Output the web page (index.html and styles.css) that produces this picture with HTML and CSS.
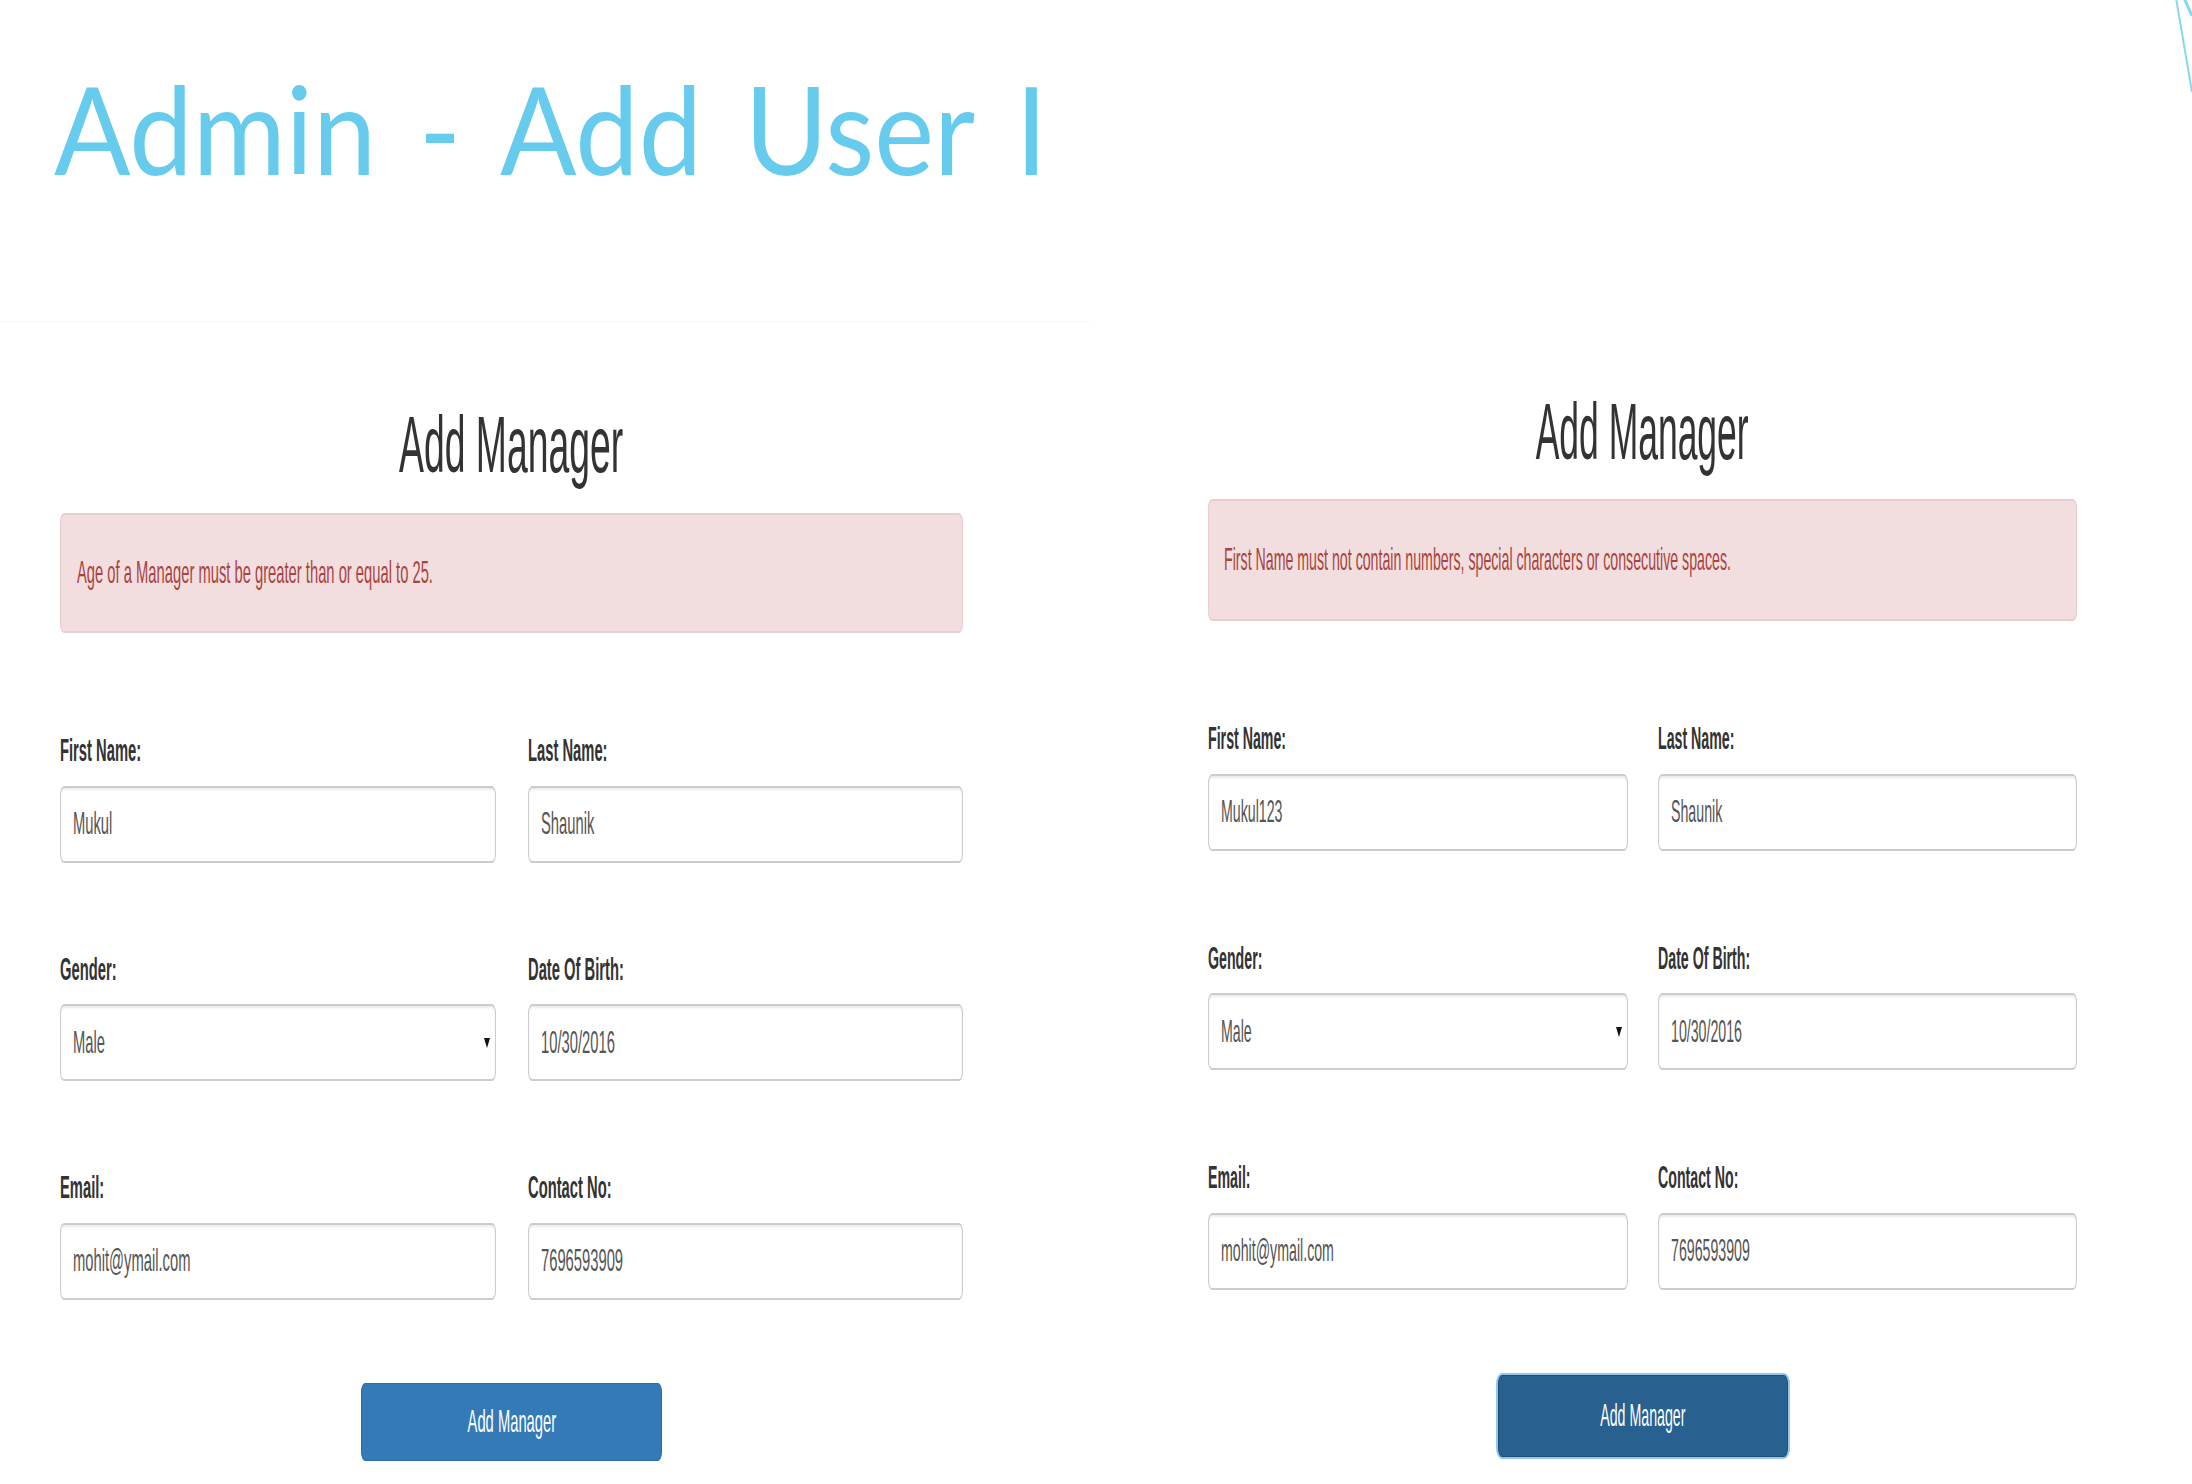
FILE: index.html
```html
<!DOCTYPE html>
<html lang="en">
<head>
<meta charset="utf-8">
<title>Admin - Add User I</title>
<link rel="stylesheet" href="styles.css">
</head>
<body>
<div class="slide">
  <svg class="deco" width="40" height="110" viewBox="0 0 40 110" aria-hidden="true">
    <line x1="24" y1="-2" x2="40" y2="92" stroke="#8ad6f1" stroke-width="2"/>
    <line x1="32" y1="-2" x2="40" y2="16" stroke="#8ad6f1" stroke-width="3"/>
  </svg>
  <h1 class="title"><span class="title-text">Admin - Add User I</span></h1>
  <div class="shots">
    <section class="shot shot-left">
      <div class="panel panel-a">
        <h2 class="ph"><span class="sq">Add Manager</span></h2>
        <div class="alert"><span class="sq">Age of a Manager must be greater than or equal to 25.</span></div>
        <div class="row">
          <div class="field"><label><span class="sq">First Name:</span></label><div class="fc"><span class="sq">Mukul</span></div></div>
          <div class="field"><label><span class="sq">Last Name:</span></label><div class="fc"><span class="sq">Shaunik</span></div></div>
        </div>
        <div class="row">
          <div class="field"><label><span class="sq">Gender:</span></label><div class="fc"><span class="sq">Male</span><i class="caret"></i></div></div>
          <div class="field"><label><span class="sq">Date Of Birth:</span></label><div class="fc"><span class="sq">10/30/2016</span></div></div>
        </div>
        <div class="row">
          <div class="field"><label><span class="sq">Email:</span></label><div class="fc"><span class="sq">mohit@ymail.com</span></div></div>
          <div class="field"><label><span class="sq">Contact No:</span></label><div class="fc"><span class="sq">7696593909</span></div></div>
        </div>
        <div class="btn-wrap"><button class="btn" type="button"><span class="sq">Add Manager</span></button></div>
      </div>
    </section>
    <section class="shot shot-right">
      <div class="panel panel-b">
        <h2 class="ph"><span class="sq">Add Manager</span></h2>
        <div class="alert"><span class="sq">First Name must not contain numbers, special characters or consecutive spaces.</span></div>
        <div class="row">
          <div class="field"><label><span class="sq">First Name:</span></label><div class="fc"><span class="sq">Mukul123</span></div></div>
          <div class="field"><label><span class="sq">Last Name:</span></label><div class="fc"><span class="sq">Shaunik</span></div></div>
        </div>
        <div class="row">
          <div class="field"><label><span class="sq">Gender:</span></label><div class="fc"><span class="sq">Male</span><i class="caret"></i></div></div>
          <div class="field"><label><span class="sq">Date Of Birth:</span></label><div class="fc"><span class="sq">10/30/2016</span></div></div>
        </div>
        <div class="row">
          <div class="field"><label><span class="sq">Email:</span></label><div class="fc"><span class="sq">mohit@ymail.com</span></div></div>
          <div class="field"><label><span class="sq">Contact No:</span></label><div class="fc"><span class="sq">7696593909</span></div></div>
        </div>
        <div class="btn-wrap"><button class="btn" type="button"><span class="sq">Add Manager</span></button></div>
      </div>
    </section>
  </div>
</div>
</body>
</html>
```
FILE: styles.css
```css
html, body {
  margin: 0;
  padding: 0;
  background: #ffffff;
}

body {
  font-family: "Liberation Sans", Arial, sans-serif;
  color: #333333;
}

.slide {
  position: relative;
  width: 2192px;
  height: 1484px;
  overflow: hidden;
  background: #ffffff;
}

.deco {
  position: absolute;
  top: 0;
  right: 0;
}

.title {
  margin: 0;
  padding: 66px 0 0 54px;
  font-family: Lato, "Open Sans", sans-serif;
  font-weight: 400;
  font-size: 123px;
  line-height: 1;
  color: #66cbec;
  white-space: nowrap;
}

.title-text {
  display: inline-block;
  transform: scaleX(0.92);
  transform-origin: left center;
  word-spacing: 15px;
}

.shots {
  display: flex;
  align-items: flex-start;
  margin-top: 132px;
}

.shot-left {
  box-sizing: border-box;
  width: 1090px;
  padding: 83px 127px 0 60px;
  border-top: 1px solid #f6f6f6;
}

.shot-right {
  box-sizing: border-box;
  width: 869px;
  margin-left: 118px;
  padding-top: 71px;
}

/* squeezed text (screenshots are compressed horizontally) */
.sq {
  display: inline-block;
  white-space: nowrap;
  transform-origin: left center;
}

.panel-a .sq {
  transform: scaleX(0.467);
}

.panel-b .sq {
  transform: scaleX(0.449);
}

.ph .sq,
.btn .sq {
  transform-origin: center center;
}

.ph {
  margin: 0;
  text-align: center;
  font-weight: 400;
  line-height: 1;
  color: #333333;
  white-space: nowrap;
}

.panel-a .ph {
  font-size: 80px;
}

.panel-b .ph {
  font-size: 79px;
}

.alert {
  box-sizing: border-box;
  display: flex;
  align-items: center;
  height: 120px;
  margin-top: 28px;
  padding: 0 16px;
  background: #f2dede;
  border: 1px solid #ebccd1;
  border-top-width: 2px;
  border-bottom-width: 2px;
  border-radius: 4px / 9px;
  color: #a94442;
  font-size: 31.6px;
  line-height: 1;
  overflow: hidden;
}

.alert .sq {
  flex-shrink: 0;
}

.panel-b .alert {
  height: 122px;
  padding-left: 15px;
}

.row {
  display: grid;
  grid-template-columns: 1fr 1fr;
  column-gap: 32px;
}

.panel-b .row {
  column-gap: 30px;
}

.alert + .row {
  margin-top: 102px;
}

.row + .row {
  margin-top: 91px;
}

.panel-b .row + .row {
  margin-top: 92px;
}

.field label {
  display: block;
  margin-bottom: 19px;
  font-weight: 700;
  font-size: 31.6px;
  line-height: 1;
  color: #333333;
}

.fc {
  box-sizing: border-box;
  display: flex;
  align-items: center;
  height: 77px;
  padding: 0 12px;
  background: #ffffff;
  border: 1px solid #cccccc;
  border-top-width: 2px;
  border-bottom-width: 2px;
  border-radius: 4px / 9px;
  box-shadow: inset 0 2px 2px rgba(0, 0, 0, 0.08);
  color: #555555;
  font-size: 31.6px;
  line-height: 1;
  overflow: hidden;
}

.fc .sq {
  flex-shrink: 0;
}

.caret {
  margin-left: auto;
  margin-right: -7px;
  width: 0;
  height: 0;
  border-left: 3px solid transparent;
  border-right: 3px solid transparent;
  border-top: 10px solid #111111;
}

.btn-wrap {
  margin-top: 83px;
  text-align: center;
}

.btn {
  box-sizing: border-box;
  width: 301px;
  height: 78px;
  padding: 0;
  background: #337ab7;
  border: 1px solid #2e6da4;
  border-radius: 4px / 9px;
  color: #ffffff;
  font-family: "Liberation Sans", Arial, sans-serif;
  font-size: 31.6px;
  line-height: 1;
  white-space: nowrap;
  overflow: hidden;
}

.panel-b .btn-wrap {
  margin-top: 85px;
}

.panel-b .btn {
  width: 290px;
  height: 82px;
  background: #286090;
  border-color: #204d74;
  box-shadow: 0 0 0 2px rgba(102, 175, 233, 0.7);
}
```
